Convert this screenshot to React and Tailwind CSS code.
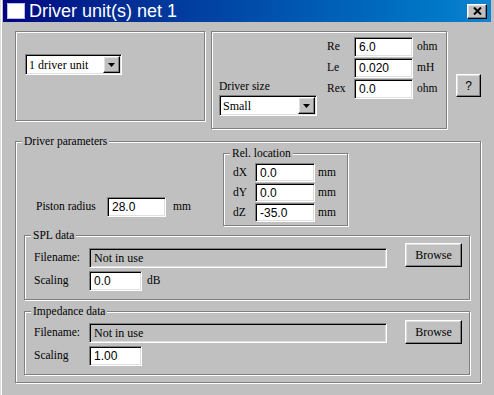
import React from "react";

const serif = "font-['Liberation_Serif',serif]";
const sans = "font-['Liberation_Sans',Arial,sans-serif]";

const sunken =
  "border border-t-[#808080] border-l-[#808080] border-r-white border-b-white shadow-[inset_1px_1px_0_#000,inset_-1px_-1px_0_#dfdfdf]";
const raised =
  "bg-[#c0c0c0] border border-t-white border-l-white border-r-black border-b-black shadow-[inset_-1px_-1px_0_#808080,inset_1px_1px_0_#dfdfdf]";

function Group({ label, className = "", children }) {
  return (
    <div
      className={`relative border border-[#808080] shadow-[inset_1px_1px_0_#fff,1px_1px_0_#fff] ${className}`}
    >
      {label && (
        <span
          className={`absolute -top-[8px] left-[6px] bg-[#c0c0c0] px-[2px] text-[11.5px] leading-[14px] whitespace-nowrap ${serif}`}
        >
          {label}
        </span>
      )}
      {children}
    </div>
  );
}

function Field({ value, className = "", disabled = false, font = sans }) {
  return (
    <input
      readOnly
      value={value}
      className={`${sunken} ${disabled ? "bg-[#c0c0c0]" : "bg-white"} ${font} text-[12px] text-black pl-[4px] outline-none ${className}`}
    />
  );
}

function Select({ value, className = "" }) {
  return (
    <div className={`${sunken} bg-white flex items-stretch p-[1px] ${className}`}>
      <span className={`flex-1 flex items-center pl-[2px] text-[12px] ${serif}`}>{value}</span>
      <span className={`${raised} w-[17px] flex items-center justify-center`}>
        <svg width="7" height="4" viewBox="0 0 7 4">
          <path d="M0 0h7L3.5 4z" fill="#000" />
        </svg>
      </span>
    </div>
  );
}

function Button({ children, className = "", font = serif }) {
  return (
    <button className={`${raised} ${font} text-[12px] text-black flex items-center justify-center ${className}`}>
      {children}
    </button>
  );
}

function DataGroup({ label, scaling, unit, fieldTop, browseTop, gap, height }) {
  return (
    <Group label={label} className={`w-[446px] ${height}`}>
      <div className="flex items-start">
        <div className={`flex items-center ${fieldTop}`}>
          <span className={`w-[64px] pl-[9px] text-[11.5px] ${serif}`}>Filename:</span>
          <Field value="Not in use" disabled font={serif} className="w-[298px] h-[20px]" />
        </div>
        <Button className={`ml-[18px] ${browseTop} w-[57px] h-[24px]`}>Browse</Button>
      </div>
      <div className={`flex items-center ${gap}`}>
        <span className={`w-[64px] pl-[9px] text-[11.5px] ${serif}`}>Scaling</span>
        <Field value={scaling} className="w-[53px] h-[20px]" />
        {unit && <span className={`ml-[5px] text-[11.5px] ${serif}`}>{unit}</span>}
      </div>
    </Group>
  );
}

export default function App() {
  return (
    <div className="w-[494px] h-[395px] bg-[#c0c0c0] overflow-hidden text-black">
      <div className="h-full flex flex-col pl-[3px] pr-[3px] shadow-[inset_1px_0_0_#dfdfdf,inset_2px_0_0_#fff]">
        <div className="h-[22px] shrink-0 flex items-center pl-[4px] pr-[4px] bg-linear-to-r from-[#000080] to-[#1084d0]">
          <div className="w-[18px] h-[16px] bg-white border border-[#b8c0e0]" />
          <span className={`ml-[4px] text-[18px] leading-[22px] text-white ${sans}`}>Driver unit(s) net 1</span>
          <button className={`${raised} ml-auto w-[20px] h-[15px] flex items-center justify-center`}>
            <svg width="9" height="8" viewBox="0 0 9 8">
              <path d="M1 0.5l7 7M8 0.5l-7 7" stroke="#000" strokeWidth="2" />
            </svg>
          </button>
        </div>

        <div className="flex-1 pl-[12px] pt-[9px]">
          <div className="flex items-start">
            <Group className="w-[190px] h-[90px] pl-[9px] pt-[22px]">
              <Select value="1 driver unit" className="w-[97px] h-[21px]" />
            </Group>

            <Group className="ml-[6px] w-[236px] h-[98px] flex">
              <div className="w-[115px] pl-[7px] pb-[12px] flex flex-col justify-end">
                <span className={`mb-[2px] text-[11.5px] leading-[14px] ${serif}`}>Driver size</span>
                <Select value="Small" className="w-[98px] h-[21px]" />
              </div>
              <div className="pt-[5px] grid grid-cols-[27px_59px_auto] gap-y-[1px] items-center self-start">
                {[
                  ["Re", "6.0", "ohm"],
                  ["Le", "0.020", "mH"],
                  ["Rex", "0.0", "ohm"],
                ].map(([l, v, u]) => (
                  <React.Fragment key={l}>
                    <span className={`text-[11.5px] ${serif}`}>{l}</span>
                    <Field value={v} className="w-[59px] h-[20px]" />
                    <span className={`pl-[4px] text-[11.5px] ${serif}`}>{u}</span>
                  </React.Fragment>
                ))}
              </div>
            </Group>

            <Button font={sans} className="ml-[9px] mt-[43px] w-[25px] h-[23px]">?</Button>
          </div>

          <Group label="Driver parameters" className="mt-[12px] w-[466px] h-[242px] pl-[8px] pt-[11px]">
            <div className="flex items-start">
              <div className="w-[199px] mt-[44px] flex items-center">
                <span className={`w-[83px] pl-[12px] text-[11.5px] ${serif}`}>Piston radius</span>
                <Field value="28.0" className="w-[59px] h-[20px]" />
                <span className={`ml-[7px] text-[11.5px] ${serif}`}>mm</span>
              </div>
              <Group label="Rel. location" className="w-[125px] h-[73px] pl-[9px] pt-[9px]">
                <div className="grid grid-cols-[22px_60px_auto] gap-y-[1px] items-center">
                  {[
                    ["dX", "0.0"],
                    ["dY", "0.0"],
                    ["dZ", "-35.0"],
                  ].map(([l, v]) => (
                    <React.Fragment key={l}>
                      <span className={`text-[11.5px] ${serif}`}>{l}</span>
                      <Field value={v} className="w-[60px] h-[19px]" />
                      <span className={`pl-[3px] text-[11.5px] ${serif}`}>mm</span>
                    </React.Fragment>
                  ))}
                </div>
              </Group>
            </div>

            <div className="mt-[9px]">
              <DataGroup
                label="SPL data"
                scaling="0.0"
                unit="dB"
                fieldTop="mt-[12px]"
                browseTop="mt-[7px]"
                gap="mt-[3px]"
                height="h-[65px]"
              />
            </div>
            <div className="mt-[11px]">
              <DataGroup
                label="Impedance data"
                scaling="1.00"
                fieldTop="mt-[11px]"
                browseTop="mt-[8px]"
                gap="mt-[2px]"
                height="h-[64px]"
              />
            </div>
          </Group>
        </div>
      </div>
    </div>
  );
}
